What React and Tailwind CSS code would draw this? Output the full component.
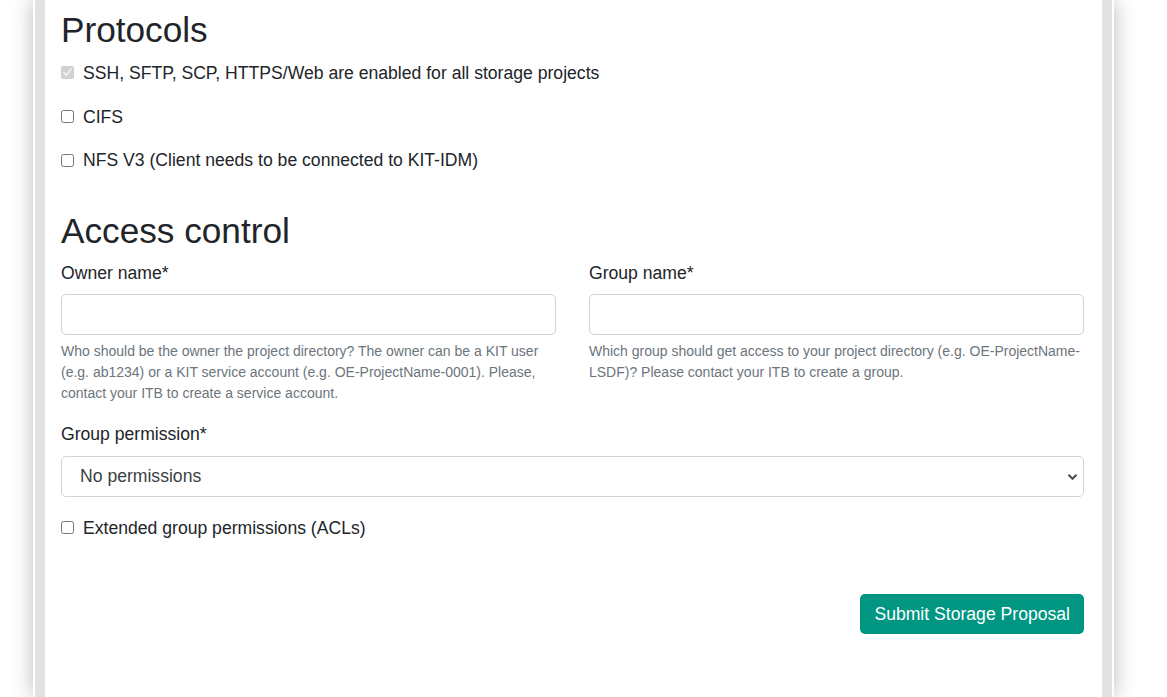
// App.jsx — storage proposal form (protocols + access control section)

const CheckRow = ({ label, checked = false, disabled = false, className = "" }) => (
  <label className={`flex items-center gap-[9px] h-[26.25px] ${className}`}>
    <input
      type="checkbox"
      defaultChecked={checked}
      disabled={disabled}
      className="w-[13px] h-[13px] m-0"
    />
    <span>{label}</span>
  </label>
);

const TextField = ({ label, help }) => (
  <div>
    <label className="block mb-[7.75px] leading-[26.25px]">{label}</label>
    <input
      type="text"
      className="block w-full h-[41px] px-[13px] border border-[#ced4da] rounded-[5px] bg-white"
    />
    <p className="mt-[6.4px] text-[14px] leading-[21px] text-[#6c757d]">{help}</p>
  </div>
);

const App = () => {
  return (
    <div
      className="h-screen overflow-hidden bg-white text-[17.6px] leading-[26.25px] text-[#212529]"
      style={{ fontFamily: '"Liberation Sans", Arial, sans-serif' }}
    >
      <div className="ml-[33px] w-[1081px] h-full bg-white px-[2px] shadow-[0_0_20px_rgba(0,0,0,0.28)]">
        <div className="h-full border-x-[10px] border-[#e2e2e2] bg-white pl-4 pr-[18px] pt-[9px]">

          {/* Protocols */}
          <h2 className="text-[35.2px] leading-[42px] font-normal mb-[8.75px]">Protocols</h2>
          <CheckRow
            label="SSH, SFTP, SCP, HTTPS/Web are enabled for all storage projects"
            checked
            disabled
            className="mb-[17.5px]"
          />
          <CheckRow label="CIFS" className="mb-[17.5px]" />
          <CheckRow label="NFS V3 (Client needs to be connected to KIT-IDM)" className="mb-[17.5px]" />

          {/* Access control */}
          <h2 className="mt-[36px] text-[35.2px] leading-[42px] font-normal mb-[8px]">Access control</h2>
          <div className="grid grid-cols-2 gap-x-[33px] mb-[17.5px]">
            <TextField
              label="Owner name*"
              help="Who should be the owner the project directory? The owner can be a KIT user (e.g. ab1234) or a KIT service account (e.g. OE-ProjectName-0001). Please, contact your ITB to create a service account."
            />
            <TextField
              label="Group name*"
              help="Which group should get access to your project directory (e.g. OE-ProjectName-LSDF)? Please contact your ITB to create a group."
            />
          </div>

          <label className="block mb-[8px] leading-[26.25px]">Group permission*</label>
          <div className="relative mb-[18px]">
            <select className="block w-full h-[41px] appearance-none pl-[18px] pr-10 border border-[#ced4da] rounded-[5px] bg-white text-[#3a3f44]">
              <option>No permissions</option>
              <option>Read</option>
              <option>Read and write</option>
            </select>
            <svg
              className="absolute right-[6px] top-[17px] pointer-events-none"
              width="11"
              height="8"
              viewBox="0 0 11 8"
              fill="none"
            >
              <path d="M1.5 1.8 L5.5 5.8 L9.5 1.8" stroke="#4a4d52" strokeWidth="2" />
            </svg>
          </div>

          <CheckRow label="Extended group permissions (ACLs)" />

          {/* Submit */}
          <div className="flex justify-end mt-[53px]">
            <button className="h-[40px] px-[14px] rounded-[5px] bg-[#009682] text-white">
              Submit Storage Proposal
            </button>
          </div>

        </div>
      </div>
    </div>
  );
};

export default App;
